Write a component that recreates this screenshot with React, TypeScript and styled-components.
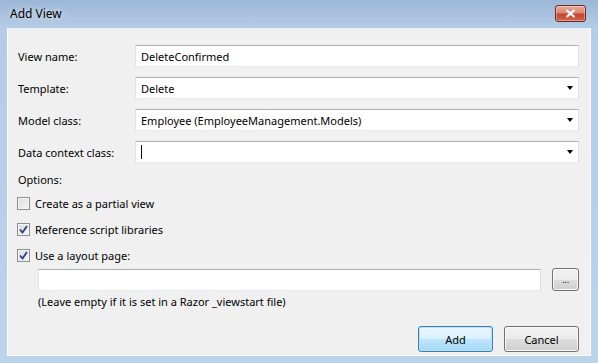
import styled, { createGlobalStyle } from "styled-components";

const GlobalStyle = createGlobalStyle`
  html, body {
    margin: 0;
    padding: 0;
    overflow: hidden;
  }
  body {
    font-family: "Noto Sans", "Open Sans", sans-serif;
    font-size: 11px;
    color: #000;
  }
`;

const Window = styled.div`
  width: 598px;
  height: 363px;
  box-sizing: border-box;
  display: flex;
  flex-direction: column;
  padding: 0 7px 7px 7px;
  background: linear-gradient(to bottom, #9cb7d7 0px, #b5cbe6 28px, #bcd3ec 100%);
`;

const TitleBar = styled.div`
  height: 28px;
  display: flex;
  align-items: center;
  justify-content: space-between;
  padding: 0 3px 2px 3px;
  box-sizing: border-box;
`;

const Title = styled.span`
  font-size: 12px;
  color: #000;
  text-shadow: 0 0 6px rgba(255, 255, 255, 0.9);
`;

const CloseButton = styled.div`
  width: 31px;
  height: 17px;
  box-sizing: border-box;
  border: 1px solid #6b2a22;
  border-radius: 3px;
  background: linear-gradient(to bottom, #e9a99b 0%, #d98674 45%, #c2452f 55%, #d2654c 100%);
  display: flex;
  align-items: center;
  justify-content: center;
  margin-right: 2px;
  box-shadow: inset 0 0 0 1px rgba(255, 255, 255, 0.35);
`;

const Client = styled.div`
  flex: 1;
  background: #f0f0f0;
  border: 1px solid #fbfcfd;
  border-top-color: #e7eef7;
  padding: 16px 11px 0 10px;
  display: flex;
  flex-direction: column;
`;

const FormGrid = styled.div`
  display: grid;
  grid-template-columns: 117px 1fr;
  row-gap: 10px;
  align-items: center;
`;

const Label = styled.span``;

const Field = styled.div`
  height: 22px;
  box-sizing: border-box;
  background: #fff;
  border: 1px solid;
  border-color: #abadb3 #dbdfe6 #e3e9ef #e2e3ea;
  display: flex;
  align-items: center;
  padding: 0 5px;
`;

const FieldText = styled.span`
  flex: 1;
  white-space: nowrap;
`;

const Caret = styled.span`
  width: 1px;
  height: 14px;
  background: #000;
`;

const Arrow = styled.span`
  width: 0;
  height: 0;
  border-left: 3.5px solid transparent;
  border-right: 3.5px solid transparent;
  border-top: 4px solid #000;
`;

const Options = styled.div`
  margin-top: 6px;
  display: flex;
  flex-direction: column;
`;

const OptionsLabel = styled.div`
  height: 21px;
  display: flex;
  align-items: center;
`;

const CheckRow = styled.label`
  display: flex;
  align-items: center;
  gap: 5px;
  height: 26px;
  margin-left: -1px;
`;

const Box = styled.span`
  width: 13px;
  height: 13px;
  box-sizing: border-box;
  border: 1px solid #8f8f8f;
  background: linear-gradient(135deg, #dcdcdc 0%, #f6f6f6 100%);
  box-shadow: inset 0 0 0 1px #f4f4f4;
  display: flex;
  align-items: center;
  justify-content: center;
`;

const LayoutRow = styled.div`
  display: flex;
  align-items: center;
  gap: 11px;
  padding-left: 20px;
`;

const LayoutField = styled(Field)`
  flex: 1;
`;

const Hint = styled.div`
  padding-left: 20px;
  margin-top: 3px;
`;

const ButtonRow = styled.div`
  margin-top: auto;
  margin-bottom: 3px;
  display: flex;
  justify-content: flex-end;
  gap: 11px;
`;

const Button = styled.div<{ $default?: boolean; $small?: boolean }>`
  width: ${(p) => (p.$small ? "27px" : "75px")};
  height: ${(p) => (p.$small ? "23px" : "26px")};
  box-sizing: border-box;
  border: 1px solid ${(p) => (p.$default ? "#3c7fb1" : "#707070")};
  border-radius: 3px;
  background: ${(p) =>
    p.$default
      ? "linear-gradient(to bottom, #eaf6fd 0%, #d9f0fc 50%, #bee6fd 51%, #a7d9f5 100%)"
      : "linear-gradient(to bottom, #f2f2f2 0%, #ebebeb 50%, #dddddd 51%, #cfcfcf 100%)"};
  box-shadow: inset 0 0 0 1px ${(p) => (p.$default ? "#b9e0f5" : "#fbfbfb")};
  display: flex;
  align-items: center;
  justify-content: center;
  font-size: ${(p) => (p.$small ? "9px" : "11px")};
`;

const Check = () => (
  <svg width="9" height="9" viewBox="0 0 9 9">
    <path d="M1 4.5 L3.5 7.5 L8 1" fill="none" stroke="#2a3e8c" strokeWidth="1.8" />
  </svg>
);

const fields = [
  { label: "View name:", value: "DeleteConfirmed", combo: false },
  { label: "Template:", value: "Delete", combo: true },
  { label: "Model class:", value: "Employee (EmployeeManagement.Models)", combo: true },
  { label: "Data context class:", value: "", combo: true, caret: true },
];

const options = [
  { text: "Create as a partial view", checked: false },
  { text: "Reference script libraries", checked: true },
  { text: "Use a layout page:", checked: true },
];

const App = () => {
  return (
    <>
      <GlobalStyle />
      <Window>
        <TitleBar>
          <Title>Add View</Title>
          <CloseButton>
            <svg width="11" height="9" viewBox="0 0 11 9">
              <path d="M1.5 1 L9.5 8 M9.5 1 L1.5 8" stroke="#fff" strokeWidth="2.2" />
            </svg>
          </CloseButton>
        </TitleBar>
        <Client>
          <FormGrid>
            {fields.map((f) => [
              <Label key={f.label + "-l"}>{f.label}</Label>,
              <Field key={f.label}>
                {f.caret && <Caret />}
                <FieldText>{f.value}</FieldText>
                {f.combo && <Arrow />}
              </Field>,
            ])}
          </FormGrid>
          <Options>
            <OptionsLabel>Options:</OptionsLabel>
            {options.map((o) => (
              <CheckRow key={o.text}>
                <Box>{o.checked && <Check />}</Box>
                <span>{o.text}</span>
              </CheckRow>
            ))}
            <LayoutRow>
              <LayoutField />
              <Button $small>...</Button>
            </LayoutRow>
            <Hint>(Leave empty if it is set in a Razor _viewstart file)</Hint>
          </Options>
          <ButtonRow>
            <Button $default>Add</Button>
            <Button>Cancel</Button>
          </ButtonRow>
        </Client>
      </Window>
    </>
  );
};

export default App;
